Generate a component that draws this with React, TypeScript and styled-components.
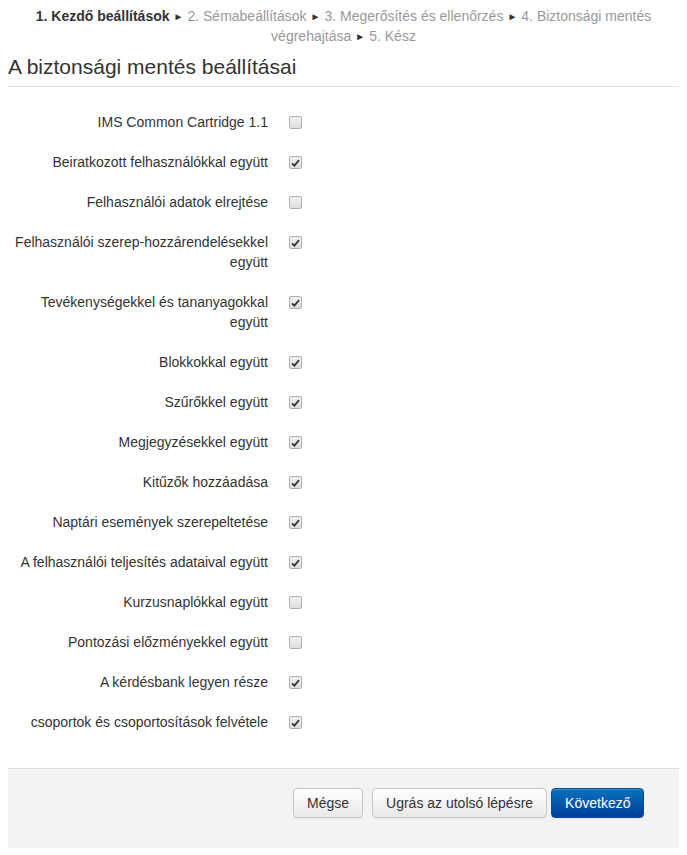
import React from "react";
import styled, { createGlobalStyle } from "styled-components";

const Global = createGlobalStyle`
  html, body { background: #fff; }
  body {
    margin: 6px 8px 8px;
    font-family: "Liberation Sans", Arial, sans-serif;
    font-size: 14px;
    color: #333;
  }
`;

const Steps = styled.div`
  text-align: center;
  font-size: 14px;
  line-height: 20px;
  color: #999;
  padding: 0 16px;
`;

const Step = styled.span<{ $current?: boolean }>`
  color: ${(p) => (p.$current ? "#333" : "#999")};
  font-weight: ${(p) => (p.$current ? "bold" : "normal")};
`;

const Arrow = styled.span`
  color: #333;
  font-size: 10px;
  line-height: 12px;
  vertical-align: 1px;
  margin: 0 4px;
`;

const Title = styled.h2`
  margin: 6px 0 0;
  font-weight: normal;
  font-size: 21px;
  line-height: 30px;
  color: #333;
  padding-bottom: 4px;
  border-bottom: 1px solid #e1e1e1;
`;

const Form = styled.div`
  padding-top: 25px;
  display: flex;
  flex-direction: column;
  gap: 20px;
`;

const Row = styled.div`
  display: grid;
  grid-template-columns: 260px 13px;
  column-gap: 21px;
  align-items: start;
`;

const Label = styled.label`
  text-align: right;
  line-height: 20px;
  font-size: 14px;
  color: #333;
`;

const Box = styled.span<{ $checked: boolean }>`
  width: 11px;
  height: 11px;
  margin-top: 4px;
  border: 1px solid #b0b0b0;
  border-radius: 2px;
  background: linear-gradient(#f2f2f2, #dcdcdc);
  display: flex;
  align-items: center;
  justify-content: center;
`;

const Footer = styled.div`
  margin-top: 36px;
  background: #f3f3f3;
  border-top: 1px solid #dddddd;
  height: 80px;
  padding: 19px 0 0 285px;
  box-sizing: border-box;
  display: flex;
  align-items: flex-start;
`;

const Button = styled.button<{ $primary?: boolean; $gap?: number }>`
  height: 30px;
  min-width: 68px;
  margin: 0 0 0 ${(p) => p.$gap ?? 0}px;
  padding: 0 13px;
  font-family: "Liberation Sans", Arial, sans-serif;
  font-size: 14px;
  border-radius: 4px;
  cursor: pointer;
  color: ${(p) => (p.$primary ? "#fff" : "#333")};
  border: 1px solid ${(p) => (p.$primary ? "#0b4a92" : "#c8c8c8")};
  background: ${(p) =>
    p.$primary
      ? "linear-gradient(#0a72bd, #003e9a)"
      : "linear-gradient(#ffffff, #e8e8e8)"};
  box-shadow: inset 0 1px 0 rgba(255, 255, 255, 0.2), 0 1px 2px rgba(0, 0, 0, 0.05);
`;

const Check = () => (
  <svg width="9" height="8" viewBox="0 0 9 8">
    <path d="M1 4.3 L3.4 6.6 L8 1.2" stroke="#333" strokeWidth="1.8" fill="none" />
  </svg>
);

const items: [string, boolean][] = [
  ["IMS Common Cartridge 1.1", false],
  ["Beiratkozott felhasználókkal együtt", true],
  ["Felhasználói adatok elrejtése", false],
  ["Felhasználói szerep-hozzárendelésekkel együtt", true],
  ["Tevékenységekkel és tananyagokkal együtt", true],
  ["Blokkokkal együtt", true],
  ["Szűrőkkel együtt", true],
  ["Megjegyzésekkel együtt", true],
  ["Kitűzők hozzáadása", true],
  ["Naptári események szerepeltetése", true],
  ["A felhasználói teljesítés adataival együtt", true],
  ["Kurzusnaplókkal együtt", false],
  ["Pontozási előzményekkel együtt", false],
  ["A kérdésbank legyen része", true],
  ["csoportok és csoportosítások felvétele", true],
];

export default function App() {
  return (
    <>
      <Global />
      <Steps>
        <Step $current>1. Kezdő beállítások</Step>
        <Arrow>►</Arrow>
        <Step>2. Sémabeállítások</Step>
        <Arrow>►</Arrow>
        <Step>3. Megerősítés és ellenőrzés</Step>
        <Arrow>►</Arrow>
        <Step>4. Biztonsági mentés végrehajtása</Step>
        <Arrow>►</Arrow>
        <Step>5. Kész</Step>
      </Steps>
      <Title>A biztonsági mentés beállításai</Title>
      <Form>
        {items.map(([label, checked]) => (
          <Row key={label}>
            <Label>{label}</Label>
            <Box $checked={checked}>{checked && <Check />}</Box>
          </Row>
        ))}
      </Form>
      <Footer>
        <Button>Mégse</Button>
        <Button $gap={9}>Ugrás az utolsó lépésre</Button>
        <Button $gap={4} $primary>
          Következő
        </Button>
      </Footer>
    </>
  );
}
